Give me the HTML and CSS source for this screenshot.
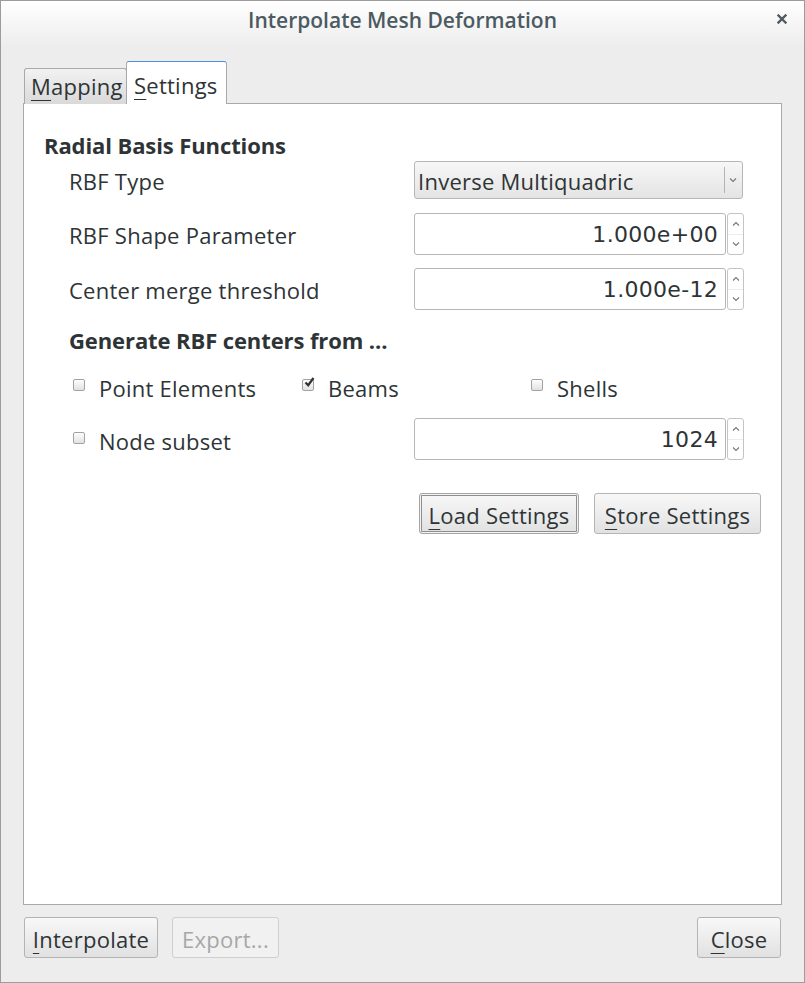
FILE: index.html
```html
<!DOCTYPE html>
<html>
<head>
<meta charset="utf-8">
<link rel="stylesheet" href="styles.css">
</head>
<body>
<div class="window">
  <div class="titlebar">
    <span class="title">Interpolate Mesh Deformation</span>
    <span class="close">
      <svg width="10" height="10" viewBox="0 0 10 10"><path d="M1.5 1.5 L8.5 8.5 M8.5 1.5 L1.5 8.5" stroke="#4f5b62" stroke-width="2.4" stroke-linecap="square"/></svg>
    </span>
  </div>
  <div class="body">
    <div class="tabbar">
      <div class="tab"><u>M</u>apping</div>
      <div class="tab active"><u>S</u>ettings</div>
    </div>
    <div class="pane">
      <div class="heading">Radial Basis Functions</div>
      <div class="row r1">
        <div class="label">RBF Type</div>
        <div class="combo">
          <span class="combo-text">Inverse Multiquadric</span>
          <span class="combo-arrow"><svg width="8" height="6" viewBox="0 0 8 6"><path d="M1 1.5 L4 4.5 L7 1.5" fill="none" stroke="#7a7a7a" stroke-width="1.2"/></svg></span>
        </div>
      </div>
      <div class="row r2">
        <div class="label">RBF Shape Parameter</div>
        <div class="spin">
          <div class="spin-field">1.000e+00</div>
          <div class="spin-arrows">
            <span><svg width="8" height="6" viewBox="0 0 8 6"><path d="M1 4.5 L4 1.5 L7 4.5" fill="none" stroke="#7a7a7a" stroke-width="1.2"/></svg></span>
            <span><svg width="8" height="6" viewBox="0 0 8 6"><path d="M1 1.5 L4 4.5 L7 1.5" fill="none" stroke="#7a7a7a" stroke-width="1.2"/></svg></span>
          </div>
        </div>
      </div>
      <div class="row r3">
        <div class="label">Center merge threshold</div>
        <div class="spin">
          <div class="spin-field">1.000e-12</div>
          <div class="spin-arrows">
            <span><svg width="8" height="6" viewBox="0 0 8 6"><path d="M1 4.5 L4 1.5 L7 4.5" fill="none" stroke="#7a7a7a" stroke-width="1.2"/></svg></span>
            <span><svg width="8" height="6" viewBox="0 0 8 6"><path d="M1 1.5 L4 4.5 L7 1.5" fill="none" stroke="#7a7a7a" stroke-width="1.2"/></svg></span>
          </div>
        </div>
      </div>
      <div class="subheading">Generate RBF centers from ...</div>
      <div class="checks">
        <label class="check"><span class="box"></span>Point Elements</label>
        <label class="check"><span class="box checked"><svg width="13" height="13" viewBox="0 0 13 13"><path d="M2.5 6.5 L5.2 9.2 L10.5 2" fill="none" stroke="#2e3436" stroke-width="2.2"/></svg></span>Beams</label>
        <label class="check"><span class="box"></span>Shells</label>
      </div>
      <div class="row r4">
        <label class="check label"><span class="box"></span>Node subset</label>
        <div class="spin">
          <div class="spin-field">1024</div>
          <div class="spin-arrows">
            <span><svg width="8" height="6" viewBox="0 0 8 6"><path d="M1 4.5 L4 1.5 L7 4.5" fill="none" stroke="#7a7a7a" stroke-width="1.2"/></svg></span>
            <span><svg width="8" height="6" viewBox="0 0 8 6"><path d="M1 1.5 L4 4.5 L7 1.5" fill="none" stroke="#7a7a7a" stroke-width="1.2"/></svg></span>
          </div>
        </div>
      </div>
      <div class="settings-buttons">
        <button class="btn focused"><u>L</u>oad Settings</button>
        <button class="btn store"><u>S</u>tore Settings</button>
      </div>
    </div>
    <div class="bottom">
      <button class="btn interp"><u>I</u>nterpolate</button>
      <button class="btn disabled">Export...</button>
      <div class="spacer"></div>
      <button class="btn closebtn"><u>C</u>lose</button>
    </div>
  </div>
</div>
</body>
</html>
```

FILE: styles.css
```css
* { box-sizing: border-box; }
html, body { margin: 0; padding: 0; }
body {
  width: 805px;
  height: 983px;
  font-family: "Open Sans", "Noto Sans", sans-serif;
  font-size: 22px;
  letter-spacing: 0.25px;
  color: #2e3436;
  background: #ededed;
}
.window {
  width: 805px;
  height: 983px;
  border: 1px solid #9c9c9c;
  background: #ededed;
  display: flex;
  flex-direction: column;
}
.titlebar {
  height: 45px;
  flex: none;
  background: linear-gradient(#ffffff, #ededed);
  display: flex;
  align-items: center;
  justify-content: center;
  position: relative;
}
.title {
  font-weight: 600;
  font-size: 21px;
  letter-spacing: 0;
  color: #4c5a61;
  margin-top: -7px;
}
.close {
  position: absolute;
  right: 17px;
  top: 13px;
  width: 10px;
  height: 10px;
  display: flex;
}
.body {
  flex: 1;
  display: flex;
  flex-direction: column;
  padding: 15px 22px 0 22px;
}
.tabbar {
  display: flex;
  align-items: flex-end;
  height: 43px;
  padding-left: 1px;
  position: relative;
  z-index: 1;
  margin-bottom: -1px;
}
.tab {
  height: 36px;
  padding: 0 6px;
  width: 103px;
  border: 1px solid #a9a9a9;
  border-bottom: none;
  border-radius: 3px 3px 0 0;
  background: linear-gradient(#f2f2f2, #d9d9d9);
  display: flex;
  align-items: center;
  line-height: 1;
  padding-bottom: 2px;
}
.tab.active {
  height: 43px;
  width: 101px;
  background: #ffffff;
  border-top: 1px solid #4a90d9;
  border-left: 1px solid #a9a9a9;
  padding: 0 7px;
  padding-top: 3px;
  margin-left: -1px;
}
u {
  text-decoration: underline;
  text-decoration-thickness: 1px;
  text-underline-offset: 5px;
}
.pane {
  height: 802px;
  background: #ffffff;
  border: 1px solid #a9a9a9;
  padding: 28px 20px 0 20px;
}
.heading, .subheading {
  font-weight: 700;
  letter-spacing: -0.1px;
  height: 26px;
  line-height: 26px;
}
.heading { margin-bottom: 1px; }
.row {
  display: flex;
  align-items: center;
  padding-left: 25px;
}
.label {
  width: 345px;
  flex: none;
  line-height: 26px;
  padding-top: 2px;
}
.r1 { margin-top: 3px; height: 38px; }
.r2 { margin-top: 14px; height: 42px; }
.r3 { margin-top: 13px; height: 42px; }
.r4 { margin-top: 20px; height: 42px; }
.subheading { margin-top: 17px; padding-left: 25px; }
.combo {
  width: 329px;
  height: 38px;
  border: 1px solid #b6b6b6;
  border-radius: 3px;
  background: linear-gradient(#f7f7f7, #e4e4e4);
  display: flex;
  align-items: center;
}
.combo-text {
  flex: 1;
  padding-left: 3px;
  padding-top: 1px;
}
.combo-arrow {
  width: 17px;
  height: 26px;
  border-left: 1px solid #b3b3b3;
  display: flex;
  align-items: center;
  justify-content: center;
  margin-right: 1px;
}
.spin {
  width: 330px;
  height: 42px;
  display: flex;
}
.spin-field {
  flex: 1;
  border: 1px solid #b6b6b6;
  border-radius: 3px;
  background: #fff;
  text-align: right;
  padding-right: 7px;
  font-family: "DejaVu Sans", sans-serif;
  font-size: 22px;
  letter-spacing: 0.3px;
  line-height: 40px;
  padding-top: 1px;
}
.spin-arrows {
  width: 17px;
  margin-left: 1px;
  border: 1px solid #c4c4c4;
  border-radius: 3px;
  display: flex;
  flex-direction: column;
}
.spin-arrows span {
  flex: 1;
  display: flex;
  align-items: center;
  justify-content: center;
}
.spin-arrows span + span { border-top: 1px solid #ececec; }
.checks {
  display: grid;
  grid-template-columns: 229px 229px 229px;
  margin-top: 19px;
  padding-left: 25px;
  height: 26px;
}
.check {
  display: flex;
  align-items: center;
  line-height: 26px;
  padding-top: 3px;
}
.box {
  width: 12px;
  height: 12px;
  margin-left: 4px;
  margin-right: 14px;
  border: 1px solid #a2a2a2;
  border-radius: 2px;
  background: linear-gradient(#fdfdfd, #e2e2e2);
  display: flex;
  position: relative;
  top: -3px;
  flex: none;
}
.box.checked svg { position: absolute; left: 0px; top: -4px; }
.check.label { padding-top: 4px; }
.settings-buttons {
  display: flex;
  justify-content: flex-end;
  gap: 15px;
  margin-top: 33px;
}
.btn {
  font-family: inherit;
  font-size: 22px;
  letter-spacing: 0.25px;
  color: #2e3436;
  height: 41px;
  border: 1px solid #b4b4b4;
  border-radius: 3px;
  background: linear-gradient(#f8f8f8, #e1e1e1);
  padding: 3px 4px 0 4px;
  line-height: 1;
  margin: 0;
  white-space: nowrap;
}
.btn.focused {
  width: 160px;
  box-shadow: inset 0 0 0 1px #f4f4f4, inset 0 0 0 2px #8e8e8e;
  border-color: #a4a4a4;
}
.btn.store { width: 167px; }
.bottom {
  display: flex;
  align-items: flex-start;
  height: 77px;
  padding: 12px 1px 0 1px;
  gap: 14px;
}
.interp { width: 134px; }
.disabled {
  width: 107px;
  color: #a6a8a8;
  background: #f1f1f1;
  border-color: #cfcfcf;
}
.spacer { flex: 1; }
.closebtn { width: 84px; }
```
